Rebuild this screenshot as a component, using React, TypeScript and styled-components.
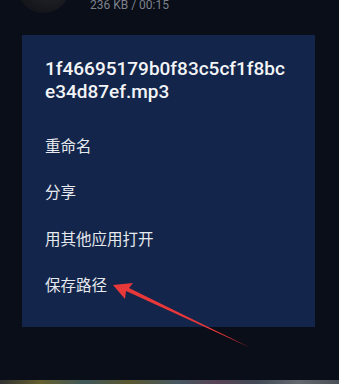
import React from "react";
import styled, { createGlobalStyle } from "styled-components";

const GlobalStyle = createGlobalStyle`
  html, body {
    margin: 0;
    padding: 0;
    background: #0a0e18;
  }
  body {
    font-family: Roboto, "Noto Sans CJK SC", "Noto Sans", sans-serif;
  }
`;

const Screen = styled.div`
  position: relative;
  width: 339px;
  height: 384px;
  overflow: hidden;
  background: #0a0e18;
  display: flex;
  flex-direction: column;
`;

const TrackRow = styled.div`
  height: 13px;
  display: flex;
  align-items: flex-end;
  gap: 20px;
  padding-left: 17px;
  overflow: hidden;
`;

const Cover = styled.div`
  width: 53px;
  height: 53px;
  flex-shrink: 0;
  border-radius: 50%;
  background: radial-gradient(circle at 60% 40%, #2a2b30, #15161b 70%);
`;

const TrackMeta = styled.div`
  font-size: 12px;
  line-height: 14px;
  color: #7d828c;
  padding-bottom: 1px;
`;

const Dialog = styled.div`
  margin: 22px 24px 0 22px;
  height: 292px;
  box-sizing: border-box;
  background: #13254a;
  padding: 22px 23px 20px 23px;
  display: flex;
  flex-direction: column;
`;

const FileName = styled.div`
  font-size: 19px;
  line-height: 23px;
  font-weight: 500;
  color: #f2f4f7;
  word-break: break-all;
  margin-bottom: 19px;
`;

const MenuItem = styled.div`
  height: 47px;
  display: flex;
  align-items: center;
  font-size: 15.5px;
  color: #e6e9ee;
`;

const BottomStrip = styled.div`
  margin-top: auto;
  height: 4px;
  background: linear-gradient(
    90deg,
    #3a3a3a 0%,
    #7a7434 12%,
    #4d6a6a 25%,
    #6e6a36 38%,
    #566a72 52%,
    #6a5064 64%,
    #505a66 76%,
    #7b7f86 88%,
    #5a6068 100%
  );
  opacity: 0.8;
`;

const Pointer = styled.svg`
  position: absolute;
  left: 0;
  top: 0;
  pointer-events: none;
`;

const items = ["重命名", "分享", "用其他应用打开", "保存路径"];

export default function App() {
  return (
    <>
      <GlobalStyle />
      <Screen>
        <TrackRow>
          <Cover />
          <TrackMeta>236 KB / 00:15</TrackMeta>
        </TrackRow>
        <Dialog>
          <FileName>1f46695179b0f83c5cf1f8bce34d87ef.mp3</FileName>
          {items.map((label) => (
            <MenuItem key={label}>{label}</MenuItem>
          ))}
        </Dialog>
        <BottomStrip />
        <Pointer width="339" height="384" viewBox="0 0 339 384">
          <polygon
            points="113,285 133,283 129,288 251,348 126,291 125,299"
            fill="#e8383a"
          />
        </Pointer>
      </Screen>
    </>
  );
}
